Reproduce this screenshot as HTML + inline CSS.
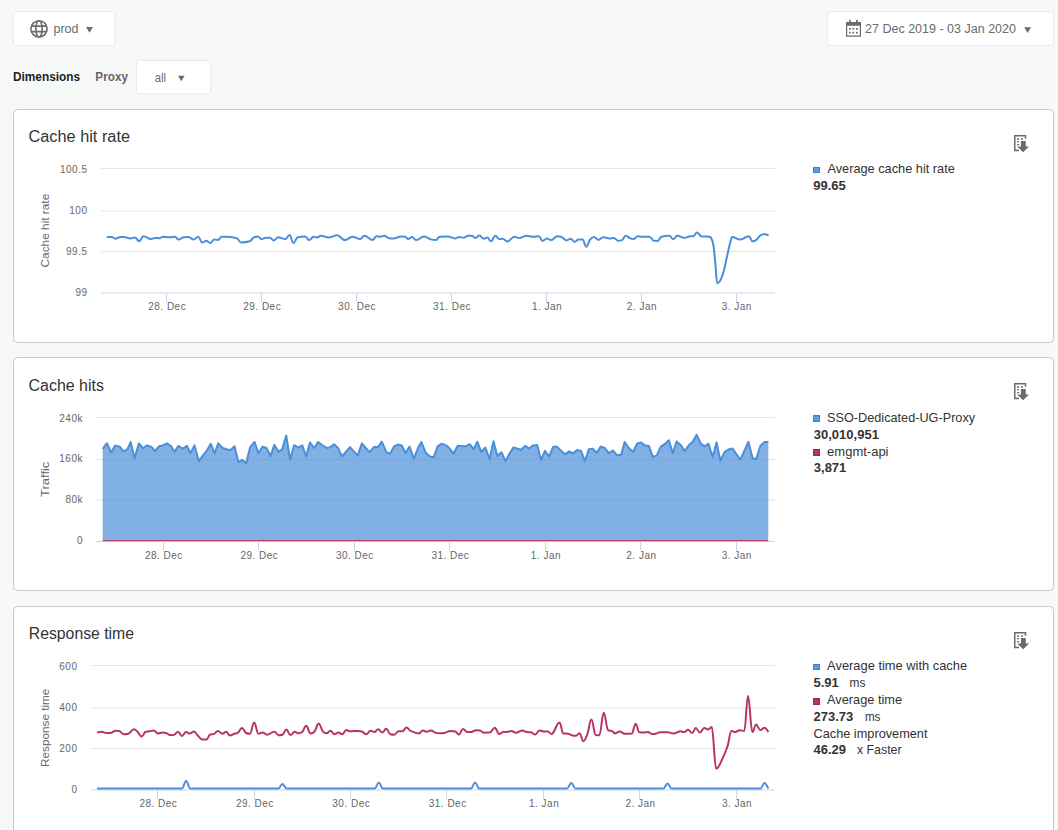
<!DOCTYPE html>
<html><head><meta charset="utf-8"><title>Cache Performance</title>
<style>
html,body{margin:0;padding:0;width:1058px;height:830px;overflow:hidden;background:#f7f9f9;font-family:"Liberation Sans", sans-serif;}
body{position:relative;}
</style></head><body>
<svg width="1058" height="830" viewBox="0 0 1058 830" style="position:absolute;left:0;top:0" font-family='"Liberation Sans", sans-serif'><rect x="13.5" y="11.5" width="101.5" height="34" rx="2.5" fill="#fff" stroke="#e9eaea"/><g fill="none" stroke="#6b6b6b" stroke-width="1.6"><circle cx="39" cy="28.9" r="8.1"/><ellipse cx="39" cy="28.9" rx="3.2" ry="8.1"/><path d="M31,26.1H47M31,31.6H47"/></g><text x="53.5" y="33" font-size="12.5" fill="#6b6b6b">prod</text><path d="M86,27H93L89.5,32.8Z" fill="#6b6b6b"/><rect x="827.5" y="11.5" width="226" height="34" rx="2.5" fill="#fff" stroke="#e9eaea"/><g fill="#6b6b6b"><path d="M846,21.9H861V36.7H846ZM847.2,25.8V35.5H859.8V25.8Z" fill-rule="evenodd"/>
<rect x="849.1" y="19.9" width="1.7" height="2.5"/><rect x="856" y="19.9" width="1.8" height="2.5"/>
<rect x="849.1" y="28" width="1.7" height="1.7"/><rect x="852.4" y="28" width="1.7" height="1.7"/><rect x="856" y="28" width="1.8" height="1.7"/>
<rect x="849.1" y="31.8" width="1.7" height="1.7"/><rect x="852.4" y="31.8" width="1.7" height="1.7"/><rect x="856" y="31.8" width="1.8" height="1.7"/></g><text x="865" y="33.1" font-size="12.5" fill="#6b6b6b" textLength="151" lengthAdjust="spacingAndGlyphs">27 Dec 2019 - 03 Jan 2020</text><path d="M1024.2,27.2H1031L1027.6,32.9Z" fill="#6b6b6b"/><text x="13" y="81.2" font-size="12" font-weight="bold" fill="#222" textLength="67" lengthAdjust="spacingAndGlyphs">Dimensions</text><text x="95.3" y="81.2" font-size="12" font-weight="bold" fill="#666" textLength="32.7" lengthAdjust="spacingAndGlyphs">Proxy</text><rect x="136.5" y="60.5" width="74" height="33.5" rx="2.5" fill="#fff" stroke="#e9eaea"/><text x="154.8" y="81.5" font-size="13" fill="#6b6b6b" textLength="11.2" lengthAdjust="spacingAndGlyphs">all</text><path d="M178,75.8H184.6L181.3,81.2Z" fill="#6b6b6b"/><rect x="13.5" y="109.5" width="1040" height="233" rx="4" ry="4" fill="#fff" stroke="#c8c8c8" stroke-width="1"/><g transform="translate(1014,135)" fill="#6b6b6b">
<path d="M5,15.6H0.75V0.75H11.5V3.8" fill="none" stroke="#6b6b6b" stroke-width="1.5"/>
<rect x="3.1" y="3.3" width="1.9" height="1.5"/><rect x="6.9" y="3.3" width="2.1" height="1.5"/>
<rect x="3.1" y="6" width="1.9" height="1.3"/><rect x="3.1" y="9" width="1.9" height="1.3"/>
<path d="M6.9,6.6Q6.9,6 7.5,6H11.2Q11.8,6 11.8,6.6V11.5H15.1L9.1,17.3L3.3,11.5H6.9Z"/>
</g><rect x="13.5" y="357.5" width="1040" height="233" rx="4" ry="4" fill="#fff" stroke="#c8c8c8" stroke-width="1"/><g transform="translate(1014,383)" fill="#6b6b6b">
<path d="M5,15.6H0.75V0.75H11.5V3.8" fill="none" stroke="#6b6b6b" stroke-width="1.5"/>
<rect x="3.1" y="3.3" width="1.9" height="1.5"/><rect x="6.9" y="3.3" width="2.1" height="1.5"/>
<rect x="3.1" y="6" width="1.9" height="1.3"/><rect x="3.1" y="9" width="1.9" height="1.3"/>
<path d="M6.9,6.6Q6.9,6 7.5,6H11.2Q11.8,6 11.8,6.6V11.5H15.1L9.1,17.3L3.3,11.5H6.9Z"/>
</g><rect x="13.5" y="606.5" width="1040" height="233" rx="4" ry="4" fill="#fff" stroke="#c8c8c8" stroke-width="1"/><g transform="translate(1014,632)" fill="#6b6b6b">
<path d="M5,15.6H0.75V0.75H11.5V3.8" fill="none" stroke="#6b6b6b" stroke-width="1.5"/>
<rect x="3.1" y="3.3" width="1.9" height="1.5"/><rect x="6.9" y="3.3" width="2.1" height="1.5"/>
<rect x="3.1" y="6" width="1.9" height="1.3"/><rect x="3.1" y="9" width="1.9" height="1.3"/>
<path d="M6.9,6.6Q6.9,6 7.5,6H11.2Q11.8,6 11.8,6.6V11.5H15.1L9.1,17.3L3.3,11.5H6.9Z"/>
</g><text x="28.5" y="141.8" font-size="16" fill="#333" textLength="101.5" lengthAdjust="spacingAndGlyphs">Cache hit rate</text><g><path d="M101,168.5H775" stroke="#e6e6e6" stroke-width="1"/><path d="M101,211H775" stroke="#e6e6e6" stroke-width="1"/><path d="M101,251.5H775" stroke="#e6e6e6" stroke-width="1"/><path d="M101,293H775" stroke="#ccd6eb" stroke-width="1"/></g><g font-size="10" fill="#666" letter-spacing="0.5"><text x="87.5" y="172.9" text-anchor="end">100.5</text><text x="87.5" y="213.9" text-anchor="end">100</text><text x="87.5" y="254.9" text-anchor="end">99.5</text><text x="87.5" y="295.9" text-anchor="end">99</text><path d="M166.5,293V302" stroke="#ccd6eb" stroke-width="1"/><text x="167.2" y="310" text-anchor="middle">28. Dec</text><path d="M261.5,293V302" stroke="#ccd6eb" stroke-width="1"/><text x="262.2" y="310" text-anchor="middle">29. Dec</text><path d="M356.5,293V302" stroke="#ccd6eb" stroke-width="1"/><text x="357.1" y="310" text-anchor="middle">30. Dec</text><path d="M451.5,293V302" stroke="#ccd6eb" stroke-width="1"/><text x="452" y="310" text-anchor="middle">31. Dec</text><path d="M546.5,293V302" stroke="#ccd6eb" stroke-width="1"/><text x="547" y="310" text-anchor="middle">1. Jan</text><path d="M641.5,293V302" stroke="#ccd6eb" stroke-width="1"/><text x="641.9" y="310" text-anchor="middle">2. Jan</text><path d="M736.5,293V302" stroke="#ccd6eb" stroke-width="1"/><text x="736.8" y="310" text-anchor="middle">3. Jan</text></g><text transform="translate(49.4,230.6) rotate(-90)" text-anchor="middle" font-size="11.5" fill="#666" textLength="73.7" lengthAdjust="spacingAndGlyphs">Cache hit rate</text><path d="M106.8,237C106.8,237 109.9,237 111.9,237C113.3,237 113.9,238.7 115.3,238.7C117.3,238.7 118.4,237 120.4,237C121.8,237 122.4,237 123.8,237C126.5,237 127.9,238.4 130.6,238.4C132.3,238.4 133.2,237.4 134.9,237.4C136.6,237.4 137.4,241.3 139.1,241.3C140.8,241.3 141.7,236.2 143.4,236.2C146.4,236.2 148,239 151,239C152.7,239 153.6,237.9 155.3,237.9C157,237.9 157.8,238.2 159.5,238.2C160.9,238.2 161.5,236.8 162.9,236.8C165.7,236.8 167,237.2 169.8,237.2C171.8,237.2 172.9,236.7 174.9,236.7C176.4,236.7 177.1,239.6 178.6,239.6C180.5,239.6 181.5,237.4 183.4,237.2C185.4,237 186.5,237 188.5,237C190.5,237 191.6,239.6 193.6,239.6C195.5,239.6 196.4,236.7 198.3,236.7C199.8,236.7 200.6,242.6 202.1,242.6C203.8,242.6 204.6,240.8 206.3,240.8C207.9,240.8 208.6,243 210.2,243C211.8,243 212.7,239.6 214.3,239.6C215.9,239.6 216.6,239.9 218.2,239.9C219.6,239.9 220.2,236.9 221.6,236.8C223.6,236.7 224.7,236.7 226.7,236.7C230.8,236.7 232.9,236.8 237,238.4C238.7,239.1 239.5,242.5 241.2,242.5C244.6,242.5 246.3,242.5 249.7,241.3C251.7,240.1 252.8,237.5 254.8,237C256,236.5 256.7,236.5 257.9,236.5C259.4,236.5 260.1,239.1 261.6,239.1C263.3,239.1 264.2,237.7 265.9,237.7C267.6,237.7 268.4,237.7 270.1,237.7C271.5,237.7 272.3,240.4 273.7,240.4C275.5,240.4 276.4,237.2 278.2,237.2C281,237.2 282.5,239.1 285.3,239.1C287,239.1 287.9,235 289.6,235C291.2,235 291.9,243 293.5,243C295.1,243 296,237.9 297.6,237.2C300.5,236.5 302,236.5 304.9,236.5C306.7,236.5 307.7,240.1 309.5,240.1C311.1,240.1 311.8,236.7 313.4,236.7C314.8,236.7 315.4,237.5 316.8,237.5C318.5,237.5 319.3,235.8 321,235.8C324.1,235.8 325.6,237.4 328.7,237.4C332.1,237.4 333.8,235.3 337.2,235.3C340.3,235.3 341.8,240.1 344.9,240.1C347.9,240.1 349.5,236.7 352.5,236.7C355.6,236.7 357.1,239.1 360.2,239.1C361.9,239.1 362.7,235.7 364.4,235.7C367.6,235.7 369.2,239.9 372.4,239.9C374.2,239.9 375,236.3 376.8,236.3C378.3,236.3 379.1,236.7 380.6,236.7C382.1,236.7 382.8,235.7 384.3,235.7C386.2,235.7 387.2,237.9 389.1,238.2C390.8,238.5 391.6,238.5 393.3,238.5C396.4,238.5 397.9,236.5 401,236.5C402.7,236.5 403.6,236.5 405.3,236.7C406.4,236.9 407,239.1 408.1,239.1C409.7,239.1 410.5,237 412.1,237C413.8,237 414.6,240.1 416.3,240.1C419.4,240.1 420.9,236.5 424,236.5C426.7,236.5 428.1,238.6 430.8,239.4C432.8,240 433.9,240.1 435.9,240.1C437.5,240.1 438.2,236.9 439.8,236.7C443,236.5 444.5,236.5 447.7,236.5C450.7,236.5 452.3,238.4 455.3,238.4C457,238.4 457.9,237 459.6,237C461.3,237 462.1,237.7 463.8,237.7C465.5,237.7 466.4,235.8 468.1,235.8C469.5,235.8 470.1,235.8 471.5,235.8C473.1,235.8 473.8,237.9 475.4,237.9C477,237.9 477.9,235.5 479.5,235.5C481.3,235.5 482.1,238.7 483.9,238.7C485.3,238.7 485.9,237.5 487.3,237.5C488.8,237.5 489.5,241.3 491,241.3C492.7,241.3 493.6,235.7 495.3,235.7C496.9,235.7 497.6,239.1 499.2,239.1C500.7,239.1 501.4,238.7 502.9,238.7C504.6,238.7 505.5,241.6 507.2,241.6C510.1,241.6 511.6,236.7 514.5,236.7C516.3,236.7 517.3,238 519.1,238C522.2,238 523.7,235.8 526.8,235.8C529.2,235.8 530.3,236.8 532.7,236.8C535.1,236.8 536.3,236.2 538.7,236.2C540.3,236.2 541,240.9 542.6,240.9C544.3,240.9 545.1,238.4 546.8,238.4C548.4,238.4 549.3,240.1 550.9,240.1C553.5,240.1 554.8,236.3 557.4,236.3C559.1,236.3 559.9,236.3 561.6,237C563.6,237.7 564.7,240.4 566.7,240.4C568.3,240.4 569.1,238.7 570.7,238.7C572.2,238.7 572.9,241.8 574.4,241.8C576.1,241.8 577,239.6 578.7,239.6C580.3,239.6 581,239.6 582.6,239.6C584.1,239.6 584.8,246.7 586.3,246.7C587.8,246.7 588.5,241.5 590,239.6C591.6,237.6 592.4,237 594,237C595.7,237 596.5,239.9 598.2,239.9C600.2,239.9 601.3,237.2 603.3,237.2C605.7,237.2 606.9,238.4 609.3,238.4C611.1,238.4 611.9,237.9 613.7,237.9C615.5,237.9 616.4,240.8 618.2,240.8C619.7,240.8 620.4,240.8 621.9,240.1C623.4,239.4 624.2,235.8 625.7,235.8C627.6,235.8 628.5,237.6 630.4,238.4C631.8,239 632.4,239.1 633.8,239.1C635.3,239.1 636.1,236.2 637.6,236.2C639.5,236.2 640.4,236.8 642.3,236.8C645.2,236.8 646.6,236.7 649.5,236.7C651.3,236.7 652.1,240.7 653.9,240.8C655.4,240.9 656.1,240.9 657.6,240.9C659.1,240.9 659.9,237.7 661.4,236.7C664.6,235.7 666.3,235.7 669.5,235.7C671,235.7 671.8,239.2 673.3,239.2C674.9,239.2 675.6,235.8 677.2,235.8C680.3,235.8 681.8,237.9 684.9,237.9C686.6,237.9 687.4,236.8 689.1,236.5C690.8,236.2 691.7,236.5 693.4,236.2C694.9,235.9 695.6,232.4 697.1,232.4C698.7,232.4 699.4,235.8 701,236.3C704.5,236.8 706.3,236.3 709.8,236.8C711.2,237.3 711.9,238.1 713.3,244.6C714.1,248.1 714.4,254.5 715.2,262C716,269.9 716.4,283.3 717.2,283.3C718.4,283.3 719.1,282.8 720.3,280.6C721.6,278.3 722.2,276.7 723.5,272C725.1,266.3 725.8,261.6 727.4,254.7C728.5,250 729,246.9 730.1,243C731,239.8 731.4,237.1 732.3,237.1C735.4,237.1 737,239.6 740.1,239.6C743.5,239.6 745.3,236.2 748.7,236.2C750.3,236.2 751,241.3 752.6,241.3C754.1,241.3 754.8,241 756.3,239.9C758,238.6 758.9,236.5 760.6,235.3C762.3,234.2 763.1,234.1 764.8,234.1C766.3,234.1 768.6,235.8 768.6,235.8" fill="none" stroke="#4a8fd9" stroke-width="2" stroke-linejoin="round"/><rect x="813.5" y="167.5" width="6" height="5" fill="#5b9be0" stroke="#3f7fcc"/><text x="827.4" y="172.9" font-size="13" fill="#333" textLength="127.4" lengthAdjust="spacingAndGlyphs">Average cache hit rate</text><text x="813.3" y="189.5" font-size="13" font-weight="bold" fill="#333">99.65</text><text x="28.5" y="390.7" font-size="16" fill="#333" textLength="75.4" lengthAdjust="spacingAndGlyphs">Cache hits</text><g><path d="M96,417.5H775" stroke="#e6e6e6" stroke-width="1"/><path d="M96,459.5H775" stroke="#e6e6e6" stroke-width="1"/><path d="M96,500H775" stroke="#e6e6e6" stroke-width="1"/><path d="M96,541.5H775" stroke="#ccd6eb" stroke-width="1"/></g><path d="M102.7,448.8 L106.9,443.2 L111.2,452.6 L115.1,445.4 L119.7,446.6 L123.6,451.4 L127.3,449.3 L130.7,442 L134.6,458.2 L138.9,443.4 L143.1,448.3 L146.9,445.4 L151.1,446.6 L154.9,451 L159.3,446.3 L163,445.4 L166.8,443.4 L170.7,445.8 L174.6,451.7 L178.4,445.9 L182.6,448.8 L186.9,445.9 L190.6,453.1 L194.5,445.4 L198.8,461.1 L203,455.3 L206.4,451.4 L210.7,443.7 L214.6,453.1 L218.3,443.4 L222.6,448 L226.8,449.3 L230.3,450.2 L234.5,446.3 L238.4,462.1 L242.2,459.9 L246.1,463.3 L250.2,447.1 L254.6,442 L258.3,453.1 L262.6,446.8 L266.5,448 L270.6,456 L274.3,444.9 L278.5,451.7 L282.2,449.3 L286.2,435.5 L290.1,459.5 L294.2,445.1 L298.1,447.6 L302.3,445.4 L306.1,456.5 L310,442.5 L314.2,448 L318.1,442 L321.9,445.1 L327,448 L330.4,447.1 L334.1,444.2 L338,448 L342,456.5 L350,447.1 L357.6,455.6 L361.9,443.4 L369.5,452.2 L373.8,447.1 L378,447.1 L381.8,441.7 L386.2,451.9 L389.9,453.9 L394.2,446.3 L397.6,444.6 L401.8,445.4 L405.6,453.1 L409.5,446.6 L413.8,458.7 L417.7,448.8 L421.4,442 L425.7,452.7 L429.9,456.5 L433.7,457.3 L437.6,446.3 L441.8,443.7 L446.1,445.4 L449.3,448 L453.5,453.6 L457.8,445.8 L465.4,446.3 L469.7,444.2 L473.6,449.2 L477.3,441.7 L481.2,451.9 L485.3,447.5 L489.6,459 L493.5,441.2 L497.4,456 L501.5,452.2 L505.4,461.1 L509.3,453.9 L513.4,447.5 L521,449.7 L525.3,445.8 L529.2,448.5 L533.1,445.4 L537.2,445.1 L541.1,459.9 L545,450.9 L549.1,456.5 L553,447.1 L556.8,446.6 L564.9,454.3 L569.2,451.4 L572.9,453.4 L577.2,450 L581.1,450.9 L584.8,461.2 L588.8,449.3 L592.7,448.8 L596.8,452.7 L600.7,446.6 L604.9,448 L608.7,453.1 L612.9,450.5 L617.2,455.3 L621.1,454.8 L624.6,442 L628.8,448 L633.1,451.9 L637,443.7 L640.8,442.4 L645,445.4 L648.9,445.9 L652.8,456.8 L656.6,455.6 L660.8,446.6 L664.6,444.2 L668.8,440.3 L672.7,453.1 L676.6,441.5 L680.7,444.9 L684.6,451 L688.9,445.1 L692.6,442 L696.6,434.7 L700.8,443.7 L704.6,446.3 L708.5,443.7 L712.7,457 L716.5,442.5 L720.4,460.7 L724.6,451.9 L728.9,449.3 L732.6,448.5 L736.5,454.3 L740.4,459.5 L748.4,442 L752.7,458.2 L756.1,459.4 L760.4,445.8 L764.6,442 L768.3,442 L768.3,540 L102.7,540 Z" fill="#4a8fd9" fill-opacity="0.7" stroke="none"/><path d="M102.7,448.8 L106.9,443.2 L111.2,452.6 L115.1,445.4 L119.7,446.6 L123.6,451.4 L127.3,449.3 L130.7,442 L134.6,458.2 L138.9,443.4 L143.1,448.3 L146.9,445.4 L151.1,446.6 L154.9,451 L159.3,446.3 L163,445.4 L166.8,443.4 L170.7,445.8 L174.6,451.7 L178.4,445.9 L182.6,448.8 L186.9,445.9 L190.6,453.1 L194.5,445.4 L198.8,461.1 L203,455.3 L206.4,451.4 L210.7,443.7 L214.6,453.1 L218.3,443.4 L222.6,448 L226.8,449.3 L230.3,450.2 L234.5,446.3 L238.4,462.1 L242.2,459.9 L246.1,463.3 L250.2,447.1 L254.6,442 L258.3,453.1 L262.6,446.8 L266.5,448 L270.6,456 L274.3,444.9 L278.5,451.7 L282.2,449.3 L286.2,435.5 L290.1,459.5 L294.2,445.1 L298.1,447.6 L302.3,445.4 L306.1,456.5 L310,442.5 L314.2,448 L318.1,442 L321.9,445.1 L327,448 L330.4,447.1 L334.1,444.2 L338,448 L342,456.5 L350,447.1 L357.6,455.6 L361.9,443.4 L369.5,452.2 L373.8,447.1 L378,447.1 L381.8,441.7 L386.2,451.9 L389.9,453.9 L394.2,446.3 L397.6,444.6 L401.8,445.4 L405.6,453.1 L409.5,446.6 L413.8,458.7 L417.7,448.8 L421.4,442 L425.7,452.7 L429.9,456.5 L433.7,457.3 L437.6,446.3 L441.8,443.7 L446.1,445.4 L449.3,448 L453.5,453.6 L457.8,445.8 L465.4,446.3 L469.7,444.2 L473.6,449.2 L477.3,441.7 L481.2,451.9 L485.3,447.5 L489.6,459 L493.5,441.2 L497.4,456 L501.5,452.2 L505.4,461.1 L509.3,453.9 L513.4,447.5 L521,449.7 L525.3,445.8 L529.2,448.5 L533.1,445.4 L537.2,445.1 L541.1,459.9 L545,450.9 L549.1,456.5 L553,447.1 L556.8,446.6 L564.9,454.3 L569.2,451.4 L572.9,453.4 L577.2,450 L581.1,450.9 L584.8,461.2 L588.8,449.3 L592.7,448.8 L596.8,452.7 L600.7,446.6 L604.9,448 L608.7,453.1 L612.9,450.5 L617.2,455.3 L621.1,454.8 L624.6,442 L628.8,448 L633.1,451.9 L637,443.7 L640.8,442.4 L645,445.4 L648.9,445.9 L652.8,456.8 L656.6,455.6 L660.8,446.6 L664.6,444.2 L668.8,440.3 L672.7,453.1 L676.6,441.5 L680.7,444.9 L684.6,451 L688.9,445.1 L692.6,442 L696.6,434.7 L700.8,443.7 L704.6,446.3 L708.5,443.7 L712.7,457 L716.5,442.5 L720.4,460.7 L724.6,451.9 L728.9,449.3 L732.6,448.5 L736.5,454.3 L740.4,459.5 L748.4,442 L752.7,458.2 L756.1,459.4 L760.4,445.8 L764.6,442 L768.3,442" fill="none" stroke="#4a8fd9" stroke-width="2" stroke-linejoin="round"/><path d="M102.7,540.6H768.3" stroke="#b5426f" stroke-width="1.4"/><g font-size="10" fill="#666" letter-spacing="0.5"><text x="83" y="421.8" text-anchor="end">240k</text><text x="83" y="462.4" text-anchor="end">160k</text><text x="83" y="503.1" text-anchor="end">80k</text><text x="83" y="543.7" text-anchor="end">0</text><path d="M163.5,541.5V550.5" stroke="#ccd6eb" stroke-width="1"/><text x="163.9" y="558.5" text-anchor="middle">28. Dec</text><path d="M258.5,541.5V550.5" stroke="#ccd6eb" stroke-width="1"/><text x="259.4" y="558.5" text-anchor="middle">29. Dec</text><path d="M354.5,541.5V550.5" stroke="#ccd6eb" stroke-width="1"/><text x="354.9" y="558.5" text-anchor="middle">30. Dec</text><path d="M449.5,541.5V550.5" stroke="#ccd6eb" stroke-width="1"/><text x="450.4" y="558.5" text-anchor="middle">31. Dec</text><path d="M545.5,541.5V550.5" stroke="#ccd6eb" stroke-width="1"/><text x="545.9" y="558.5" text-anchor="middle">1. Jan</text><path d="M640.5,541.5V550.5" stroke="#ccd6eb" stroke-width="1"/><text x="641.4" y="558.5" text-anchor="middle">2. Jan</text><path d="M736.5,541.5V550.5" stroke="#ccd6eb" stroke-width="1"/><text x="736.8" y="558.5" text-anchor="middle">3. Jan</text></g><text transform="translate(49.2,479.3) rotate(-90)" text-anchor="middle" font-size="11.5" fill="#666" textLength="35.2" lengthAdjust="spacingAndGlyphs">Traffic</text><rect x="813.5" y="415.5" width="6" height="6" fill="#5b9be0" stroke="#3f7fcc"/><text x="827.1" y="422" font-size="13" fill="#333" textLength="148" lengthAdjust="spacingAndGlyphs">SSO-Dedicated-UG-Proxy</text><text x="813.8" y="438.5" font-size="13" font-weight="bold" fill="#333">30,010,951</text><rect x="813.5" y="449.5" width="6" height="6" fill="#b8336a" stroke="#9c2456"/><text x="827.1" y="455.7" font-size="13" fill="#333">emgmt-api</text><text x="813.8" y="472.2" font-size="13" font-weight="bold" fill="#333">3,871</text><text x="28.8" y="638.7" font-size="16" fill="#333" textLength="105.2" lengthAdjust="spacingAndGlyphs">Response time</text><g><path d="M91,665.5H775" stroke="#e6e6e6" stroke-width="1"/><path d="M91,708H775" stroke="#e6e6e6" stroke-width="1"/><path d="M91,748.5H775" stroke="#e6e6e6" stroke-width="1"/><path d="M91,790H775" stroke="#ccd6eb" stroke-width="1"/></g><g font-size="10" fill="#666" letter-spacing="0.5"><text x="77.5" y="669.8" text-anchor="end">600</text><text x="77.5" y="710.8" text-anchor="end">400</text><text x="77.5" y="751.7" text-anchor="end">200</text><text x="77.5" y="792.7" text-anchor="end">0</text><path d="M157.5,790V799" stroke="#ccd6eb" stroke-width="1"/><text x="158.4" y="807" text-anchor="middle">28. Dec</text><path d="M254.5,790V799" stroke="#ccd6eb" stroke-width="1"/><text x="254.9" y="807" text-anchor="middle">29. Dec</text><path d="M350.5,790V799" stroke="#ccd6eb" stroke-width="1"/><text x="351.3" y="807" text-anchor="middle">30. Dec</text><path d="M446.5,790V799" stroke="#ccd6eb" stroke-width="1"/><text x="447.7" y="807" text-anchor="middle">31. Dec</text><path d="M543.5,790V799" stroke="#ccd6eb" stroke-width="1"/><text x="544.1" y="807" text-anchor="middle">1. Jan</text><path d="M639.5,790V799" stroke="#ccd6eb" stroke-width="1"/><text x="640.5" y="807" text-anchor="middle">2. Jan</text><path d="M736.5,790V799" stroke="#ccd6eb" stroke-width="1"/><text x="737" y="807" text-anchor="middle">3. Jan</text></g><text transform="translate(49.3,727.8) rotate(-90)" text-anchor="middle" font-size="11.5" fill="#666" textLength="78.4" lengthAdjust="spacingAndGlyphs">Response time</text><path d="M97.1,732.6C97.1,732.6 100,731.8 101.9,731.8C103.6,731.8 104.5,733 106.2,733C107.9,733 108.7,733 110.4,733C112.4,733 113.5,730.8 115.5,730.8C116.9,730.8 117.5,730.8 118.9,730.9C120.9,731 122,734.3 124,734.3C125.7,734.3 126.6,734.3 128.3,733.8C130.5,733.3 131.7,729.2 133.9,729.2C135.4,729.2 136.1,730.4 137.6,731.8C139.1,733.3 139.9,736.4 141.4,736.4C143.2,736.4 144,732.3 145.8,731.8C147.4,731.3 148.3,731.6 149.9,731.3C151.5,731 152.2,730.4 153.8,730.4C155.4,730.4 156.1,733.5 157.7,733.5C159.5,733.5 160.5,732.5 162.3,732.5C163.9,732.5 164.6,732.5 166.2,733C167.7,733.5 168.5,735 170,735C171.7,735 172.5,735 174.2,734.7C175.7,734.4 176.5,731.8 178,731.8C179.6,731.8 180.3,735.9 181.9,735.9C183.6,735.9 184.4,732.1 186.1,732.1C187.7,732.1 188.4,733.5 190,733.5C191.5,733.5 192.3,731.6 193.8,731.6C195.3,731.6 196,733.8 197.5,735.2C199.4,737 200.4,739.4 202.3,739.4C204,739.4 204.8,739.4 206.5,739.4C207.9,739.4 208.5,735.6 209.9,734.7C211.6,733.8 212.5,734.6 214.2,733.8C215.7,733.1 216.4,730.9 217.9,730.9C219.7,730.9 220.6,733.8 222.4,733.8C223.9,733.8 224.6,731.8 226.1,731.8C227.7,731.8 228.4,735.5 230,735.5C231.7,735.5 232.6,734.4 234.3,733.8C235.8,733.3 236.5,733.7 238,732.6C239.6,731.4 240.3,727.9 241.9,727.9C243.6,727.9 244.5,732.2 246.2,733C247.7,733.8 248.4,733.8 249.9,733.8C251.6,733.8 252.5,722.4 254.2,722.4C255.9,722.4 256.7,733.8 258.4,733.8C260.1,733.8 261,732.5 262.7,732.5C264.4,732.5 265.2,734.7 266.9,734.7C269.9,734.7 271.4,731.8 274.4,731.8C276.1,731.8 276.9,735.2 278.6,735.2C280.2,735.2 280.9,735.2 282.5,734.7C284,734.2 284.8,729.6 286.3,729.6C288,729.6 288.8,735 290.5,735C292.2,735 293.1,731.8 294.8,731.8C296.4,731.8 297.1,733.3 298.7,733.3C300.1,733.3 300.7,733.3 302.1,732.1C303.7,730.9 304.6,725.8 306.2,725.8C308,725.8 308.8,733.5 310.6,733.5C312.2,733.5 313.1,733.3 314.7,731.3C316.3,729.4 317,723.6 318.6,723.6C320.3,723.6 321.1,729.3 322.8,731.3C324.3,733.1 325.1,733.3 326.6,733.3C328.2,733.3 328.9,730.8 330.5,730.8C332.1,730.8 332.8,734.3 334.4,734.3C336,734.3 336.9,732.5 338.5,732.5C340.1,732.5 340.8,734.2 342.4,734.2C344,734.2 344.7,729.9 346.3,729.9C347.8,729.9 348.6,731.3 350.1,731.3C353.5,731.3 355.2,730.9 358.6,730.9C360.1,730.9 360.8,730.9 362.3,731.6C363.9,732.3 364.6,734.3 366.2,734.3C367.9,734.3 368.8,730.8 370.5,730.8C372.1,730.8 372.8,732.1 374.4,732.1C375.9,732.1 376.6,729.2 378.1,729.2C379.8,729.2 380.7,732.6 382.4,732.6C383.9,732.6 384.6,728.7 386.1,728.7C387.8,728.7 388.7,733.7 390.4,734.2C392,734.7 392.7,734.7 394.3,734.7C396,734.7 396.8,731.3 398.5,731.3C400.1,731.3 400.9,731.3 402.5,731.3C404.1,731.3 404.9,727.5 406.5,727.5C408.1,727.5 408.9,730 410.5,730.8C413.9,732.4 415.6,733.5 419,733.5C420.6,733.5 421.3,730.4 422.9,730.4C424.4,730.4 425.1,731.8 426.6,731.8C428.3,731.8 429.2,730.4 430.9,730.4C432.6,730.4 433.4,732 435.1,732.6C436.8,733.2 437.7,733.3 439.4,733.3C441.7,733.3 442.8,733.2 445.1,732.7C447.1,732.3 448.2,731.1 450.2,731.1C452.2,731.1 453.3,731.1 455.3,731.5C456.8,731.9 457.6,734.5 459.1,734.5C460.7,734.5 461.4,728.9 463,728.9C464.7,728.9 465.5,732 467.2,732C468.9,732 469.8,732 471.5,732C473.2,732 474,730.3 475.7,730.3C477.4,730.3 478.3,730.3 480,730.6C481.7,730.9 482.5,732.7 484.2,732.7C486.6,732.7 487.8,732.7 490.2,732.3C492,731.9 493,727.7 494.8,727.7C496.6,727.7 497.4,734 499.2,734C500.8,734 501.7,732.2 503.3,732C505.1,731.8 505.9,732 507.7,731.8C509.2,731.6 510,731.1 511.5,731.1C513.2,731.1 514,732.8 515.7,732.8C518.4,732.8 519.8,730.6 522.5,730.6C524.2,730.6 525.1,731.7 526.8,732C528.5,732.3 529.3,732 531,732.3C532.7,732.6 533.6,734.5 535.3,734.5C537,734.5 537.8,730.6 539.5,730.6C541.2,730.6 542.1,731.5 543.8,731.5C545.5,731.5 546.3,731.5 548,731.5C549.4,731.5 550,734 551.4,734C554.7,734 556.3,722.5 559.6,722.5C561.1,722.5 561.8,733.3 563.3,733.5C565.1,733.7 566.1,733.5 567.9,733.7C569.8,733.9 570.8,735.1 572.7,735.4C574.1,735.7 574.7,735.7 576.1,735.7C577.5,735.7 578.1,733.2 579.5,733.2C581.1,733.2 581.8,741.2 583.4,741.2C584.9,741.2 585.7,738.6 587.2,734.5C588.9,730 589.7,719.6 591.4,719.6C593.1,719.6 594,734.6 595.7,734.9C597.2,735.2 597.9,735.2 599.4,735.2C601.1,735.2 602,712.8 603.7,712.8C605.5,712.8 606.3,729.1 608.1,730.1C609.7,731.1 610.6,730.3 612.2,731.1C613.3,731.6 613.9,733.4 615,733.4C616.9,733.4 617.9,731.5 619.8,731.5C621.7,731.5 622.7,733.7 624.6,733.7C627.5,733.7 629,733.7 631.9,733.4C633.4,733.1 634.1,723.7 635.6,723.7C637,723.7 637.7,731.6 639.1,732.1C641,732.6 642,732.6 643.9,732.6C645.5,732.6 646.3,732.1 647.9,732.1C649.5,732.1 650.4,733.9 652,733.9C653.6,733.9 654.4,733.9 656,733.7C657.6,733.5 658.4,732.3 660,732.3C663.2,732.3 664.8,732.3 668,732.3C669.9,732.3 670.9,733.4 672.8,733.4C674.1,733.4 674.8,733.3 676.1,732.9C677.7,732.4 678.5,731.3 680.1,731.3C681.7,731.3 682.5,732.1 684.1,732.1C685.7,732.1 686.5,729.8 688.1,729.8C689.7,729.8 690.5,733.1 692.1,733.1C693.6,733.1 694.3,728.1 695.8,728.1C697.4,728.1 698.2,732.6 699.8,732.6C701.6,732.6 702.4,728.1 704.2,728.1C705.8,728.1 706.6,729.4 708.2,729.4C709.6,729.4 710.3,727 711.7,727C713.5,727 714.4,768.7 716.2,768.7C718.5,768.7 719.6,764.4 721.9,759.9C724.1,755.4 725.3,752.9 727.5,746.2C729.1,741.4 729.9,731 731.5,731C733.1,731 733.9,732.1 735.5,732.1C737.1,732.1 737.9,730.2 739.5,730.2C741.4,730.2 742.4,731 744.3,731C745.8,731 746.5,696.1 748,696.1C749.8,696.1 750.6,732.1 752.4,732.1C753.9,732.1 754.6,724.5 756.1,724.5C757.8,724.5 758.7,730.2 760.4,730.2C762,730.2 762.8,727.8 764.4,727.8C766,727.8 768.4,732.1 768.4,732.1" fill="none" stroke="#b8336a" stroke-width="2" stroke-linejoin="round"/><path d="M97,788.4 L182.1,788.4 C183.6,788.4 184.5,781 186.1,781 C187.7,781 188.6,788.4 190.1,788.4 L278.5,788.4 C280,788.4 280.9,783.9 282.5,783.9 C284.1,783.9 285,788.4 286.5,788.4 L374.8,788.4 C376.3,788.4 377.2,782.6 378.8,782.6 C380.4,782.6 381.3,788.4 382.8,788.4 L471.1,788.4 C472.6,788.4 473.5,782.6 475.1,782.6 C476.7,782.6 477.6,788.4 479.1,788.4 L567.3,788.4 C568.8,788.4 569.7,782.9 571.3,782.9 C572.9,782.9 573.8,788.4 575.3,788.4 L663.5,788.4 C665,788.4 665.9,783.5 667.5,783.5 C669.1,783.5 670,788.4 671.5,788.4 L760.5,788.4 C762,788.4 762.9,783.1 764.5,783.1 C766.1,783.1 767.5,787.4 768.5,788.4" fill="none" stroke="#4a8fd9" stroke-width="2" stroke-linejoin="round"/><rect x="813.5" y="664.5" width="6" height="5" fill="#5b9be0" stroke="#3f7fcc"/><text x="827.1" y="669.9" font-size="13" fill="#333" textLength="140" lengthAdjust="spacingAndGlyphs">Average time with cache</text><text x="813.5" y="686.6" font-size="13" font-weight="bold" fill="#333">5.91</text><text x="849.6" y="686.6" font-size="13" fill="#333" textLength="15.8" lengthAdjust="spacingAndGlyphs">ms</text><rect x="813.5" y="698.5" width="6" height="6" fill="#b8336a" stroke="#9c2456"/><text x="827.1" y="703.6" font-size="13" fill="#333" textLength="74.9" lengthAdjust="spacingAndGlyphs">Average time</text><text x="813.5" y="720.6" font-size="13" font-weight="bold" fill="#333">273.73</text><text x="864.9" y="720.6" font-size="13" fill="#333" textLength="15.5" lengthAdjust="spacingAndGlyphs">ms</text><text x="813.5" y="737.6" font-size="13" fill="#333" textLength="114" lengthAdjust="spacingAndGlyphs">Cache improvement</text><text x="813.5" y="754.1" font-size="13" font-weight="bold" fill="#333">46.29</text><text x="856.9" y="754.1" font-size="13" fill="#333" textLength="44.7" lengthAdjust="spacingAndGlyphs">x Faster</text></svg>
</body></html>
